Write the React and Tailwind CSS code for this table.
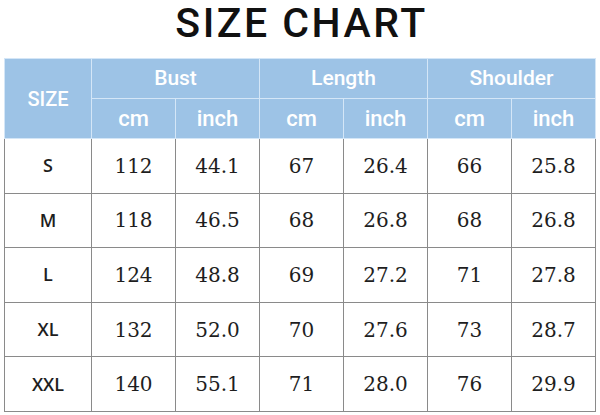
import React from "react";

const rows = [
  ["S", "112", "44.1", "67", "26.4", "66", "25.8"],
  ["M", "118", "46.5", "68", "26.8", "68", "26.8"],
  ["L", "124", "48.8", "69", "27.2", "71", "27.8"],
  ["XL", "132", "52.0", "70", "27.6", "73", "28.7"],
  ["XXL", "140", "55.1", "71", "28.0", "76", "29.9"],
];

const widths = ["w-[87px]", "w-[84px]", "w-[84px]", "w-[84px]", "w-[84px]", "w-[84px]", "w-[84px]"];

export default function App() {
  return (
    <div className="w-[600px] h-[415px] bg-white overflow-hidden">
      <h1 className="h-[58px] pl-[3px] text-center text-[41px] leading-[46px] font-medium text-[#111] tracking-[2.5px] [font-family:Roboto,sans-serif]">
        SIZE CHART
      </h1>
      <table className="ml-[4px] w-[591px] border-collapse table-fixed">
        <colgroup>
          {widths.map((w, i) => (
            <col key={i} className={w} />
          ))}
        </colgroup>
        <thead className="bg-[#9dc3e6] text-white [font-family:Roboto,sans-serif] font-medium">
          <tr className="h-[40px]">
            <th rowSpan={2} className="border border-[#d4e6f7] text-[20px] font-medium">
              SIZE
            </th>
            {["Bust", "Length", "Shoulder"].map((h) => (
              <th key={h} colSpan={2} className="border border-[#d4e6f7] text-[21px] font-medium">
                {h}
              </th>
            ))}
          </tr>
          <tr className="h-[40px]">
            {["cm", "inch", "cm", "inch", "cm", "inch"].map((h, i) => (
              <th key={i} className="border border-[#d4e6f7] text-[22px] font-medium">
                {h}
              </th>
            ))}
          </tr>
        </thead>
        <tbody className="text-[#1e1e1e]">
          {rows.map((r) => (
            <tr key={r[0]} className="h-[54.6px]">
              <td className="border border-[#8a8a8a] text-center text-[18px] font-semibold [font-family:'Open_Sans',sans-serif]">
                {r[0]}
              </td>
              {r.slice(1).map((v, i) => (
                <td key={i} className="border border-[#8a8a8a] text-center text-[20px] [font-family:'DejaVu_Serif',serif]">
                  {v}
                </td>
              ))}
            </tr>
          ))}
        </tbody>
      </table>
    </div>
  );
}
